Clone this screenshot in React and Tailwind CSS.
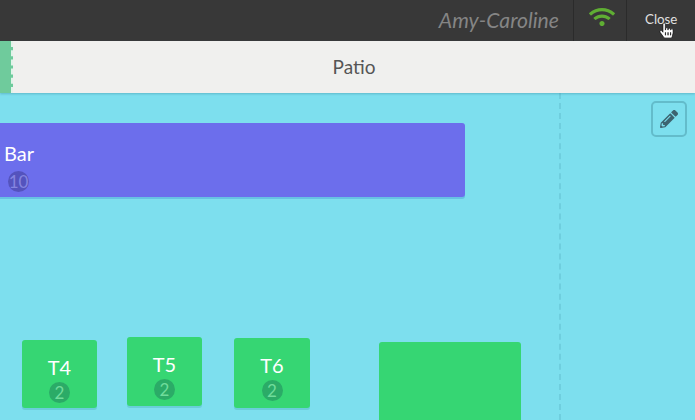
import React from "react";
import { FaWifi, FaPencilAlt, FaHandPointer } from "react-icons/fa";

const tables = [
  { name: "T4", pos: "left-[22px] top-[247px] w-[75px] h-[68px]" },
  { name: "T5", pos: "left-[127px] top-[244px] w-[75px] h-[69px]" },
  { name: "T6", pos: "left-[234px] top-[245px] w-[76px] h-[70px]" },
];

const Table = ({ name, pos }) => (
  <div
    className={`absolute ${pos} flex flex-col items-center pt-[15px] rounded-[3px] bg-[#36d673] shadow-[0_2px_0_rgba(60,170,170,0.3)]`}
  >
    <div className="text-[20px] leading-[24px] text-white">{name}</div>
    <div className="mt-[3px] w-[21px] h-[21px] rounded-full bg-[#2bab67] text-[#6fdc9b] text-[17px] leading-[21px] text-center">
      2
    </div>
  </div>
);

const App = () => {
  return (
    <div className="w-[695px] h-[420px] overflow-hidden flex flex-col font-['Lato','Open_Sans',sans-serif]">
      <div className="h-[41px] shrink-0 flex justify-end bg-[#383838]">
        <div className="flex items-center pr-[14px] italic text-[21.2px] text-[#858585]">
          Amy-Caroline
        </div>
        <div className="w-[53px] flex items-center justify-center border-l border-[#2b2b2b]">
          <FaWifi className="text-[#5fae33] text-[26px] mb-[7px] ml-[4px]" />
        </div>
        <div className="relative w-[69px] border-l border-[#2b2b2b] flex items-center pl-[18px] pb-[1px] text-[13.3px] text-[#e0e0e0]">
          Close
          <FaHandPointer className="absolute left-[32px] top-[23px] text-white text-[15px] stroke-[20px] stroke-black" />
        </div>
      </div>

      <div className="h-[52px] shrink-0 flex bg-[#f0f0ee] shadow-[0_1px_2px_rgba(50,130,150,0.4)] z-10">
        <div className="w-[13px] bg-[#6fcb9c] border-r-2 border-dashed border-[#e2f3ea]" />
        <div className="flex-1 flex items-center justify-center text-[19px] text-[#555555]">
          Patio
        </div>
      </div>

      <div className="relative flex-1 bg-[#7ddfee]">
        <div className="absolute left-[559px] top-0 bottom-0 border-l-2 border-dashed border-[#6fcede]" />

        <button className="absolute left-[651px] top-[8px] w-[36px] h-[36px] flex items-center justify-center rounded-[5px] border-2 border-[#63bccb] text-[#3d6470]">
          <FaPencilAlt className="text-[18px]" />
        </button>

        <div className="absolute left-0 top-[30px] w-[465px] h-[74px] pl-[4px] pt-[18px] rounded-r-[3px] bg-[#6c6eec] shadow-[0_2px_0_rgba(70,150,210,0.4)]">
          <div className="text-[20px] leading-[24px] text-white">Bar</div>
          <div className="mt-[6px] ml-[4px] w-[21px] h-[21px] rounded-full bg-[#5453bd] text-[#8585e0] text-[17px] leading-[21px] text-center">
            10
          </div>
        </div>

        {tables.map((t) => (
          <Table key={t.name} name={t.name} pos={t.pos} />
        ))}

        <div className="absolute left-[379px] top-[249px] w-[142px] h-[90px] rounded-[3px] bg-[#36d673]" />
      </div>
    </div>
  );
};

export default App;
